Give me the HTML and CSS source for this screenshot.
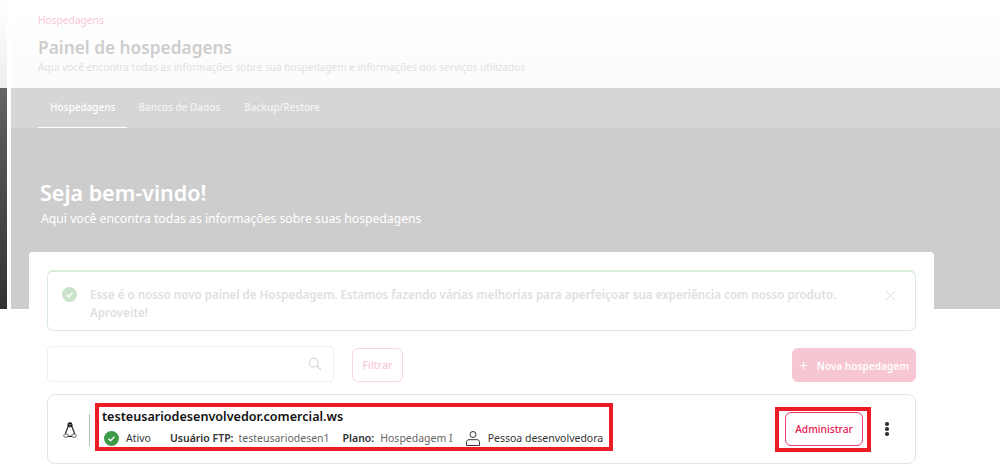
FILE: index.html
```html
<!DOCTYPE html>
<html lang="pt-BR">
<head>
    <meta charset="UTF-8">
    <title>Painel de hospedagens</title>
    <link rel="stylesheet" href="styles.css">
</head>
<body>
    <div class="shell">
        <div class="side"><div class="side_top"></div><div class="side_dark"></div></div>
        <main class="main">
            <header class="top">
                <div class="crumb">Hospedagens</div>
                <h1 class="title">Painel de hospedagens</h1>
                <p class="subtitle">Aqui você encontra todas as informações sobre sua hospedagem e informações dos serviços utilizados</p>
            </header>
            <nav class="tabs">
                <a class="tab active">Hospedagens</a>
                <a class="tab">Bancos de Dados</a>
                <a class="tab">Backup/Restore</a>
            </nav>
            <section class="hero">
                <h2 class="hero_title">Seja bem-vindo!</h2>
                <p class="hero_sub">Aqui você encontra todas as informações sobre suas hospedagens</p>
                <div class="card">
                    <div class="alert">
                        <svg class="alert_icon" viewBox="0 0 16 16"><circle cx="8" cy="8" r="8" fill="#c9e4cb"/><path d="M5 8.2l2.1 2.1L11 6.2" fill="none" stroke="#fff" stroke-width="1.5"/></svg>
                        <p class="alert_text">Esse é o nosso novo painel de Hospedagem. Estamos fazendo várias melhorias para aperfeiçoar sua experiência com nosso produto. Aproveite!</p>
                        <svg class="alert_close" viewBox="0 0 12 12"><path d="M1 1l10 10M11 1L1 11" stroke="#dcdcdc" stroke-width="1" fill="none"/></svg>
                    </div>
                    <div class="toolbar">
                        <div class="search">
                            <svg class="search_icon" viewBox="0 0 16 16"><circle cx="6.5" cy="6.5" r="5" fill="none" stroke="#d2d2d2" stroke-width="1.2"/><path d="M10.2 10.2l4.8 4.8" stroke="#d2d2d2" stroke-width="1.4"/></svg>
                        </div>
                        <button class="btn_filter" type="button">Filtrar</button>
                        <button class="btn_new" type="button"><span class="plus">+</span>Nova hospedagem</button>
                    </div>
                    <div class="host">
                        <svg class="linux" viewBox="0 0 14 16">
                            <path d="M7 .3C5.3.3 4.5 1.6 4.500 3v2.200h5V3C9.500 1.600 8.700.3 7 .3z" fill="#111"/>
                            <path d="M5.800 2.600h.7M7.500 2.600h.7" stroke="#fff" stroke-width="1"/>
                            <path d="M5.900 4.200L7 5l1.100-.8z" fill="#ddd"/>
                            <path d="M4.800 5C4.500 7.200 2.800 8.800 2.500 12M9.200 5c.3 2.200 2 3.800 2.300 7M4.500 14.300h5" fill="none" stroke="#222" stroke-width="1.2"/>
                            <ellipse cx="3" cy="13.600" rx="2.300" ry="1.700" fill="#fff" stroke="#666" stroke-width="1"/>
                            <ellipse cx="11" cy="13.600" rx="2.300" ry="1.700" fill="#fff" stroke="#666" stroke-width="1"/>
                        </svg>
                        <div class="host_sep"></div>
                        <div class="mark host_info">
                            <div class="domain">testeusariodesenvolvedor.comercial.ws</div>
                            <div class="meta">
                                <svg class="ok" viewBox="0 0 16 16"><circle cx="8" cy="8" r="8" fill="#3b9b48"/><path d="M4.800 8.200l2.200 2.100L11.200 6" fill="none" stroke="#fff" stroke-width="1.500"/></svg>
                                <span class="status">Ativo</span>
                                <b class="label ftp">Usuário FTP:</b>
                                <span class="value">testeusariodesen1</span>
                                <b class="label plan">Plano:</b>
                                <span class="value">Hospedagem I</span>
                                <svg class="person" viewBox="0 0 14 15"><circle cx="7" cy="3.500" r="3" fill="none" stroke="#333" stroke-width="1"/><path d="M.5 14.500v-3.300c0-1.500 1-2.500 2.500-2.500h8c1.500 0 2.500 1 2.500 2.500v3.300z" fill="none" stroke="#333" stroke-width="1"/></svg>
                                <span class="status">Pessoa desenvolvedora</span>
                            </div>
                        </div>
                        <div class="mark host_action">
                            <button class="btn_admin" type="button">Administrar</button>
                        </div>
                        <div class="kebab"><i></i><i></i><i></i></div>
                    </div>
                </div>
            </section>
        </main>
    </div>
</body>
</html>
```
FILE: styles.css
```css
* {
    box-sizing: border-box;
}
html, body {
    height: 473px;
}
body {
    margin: 0;
    background-color: #fff;
    font-family: "Noto Sans", "Open Sans", sans-serif;
}
p, h1, h2 {
    margin: 0;
}
.shell {
    display: flex;
    height: 309px;
}
.side {
    width: 7px;
    margin-right: 4px;
    display: flex;
    flex-direction: column;
    flex: none;
}
.side_top {
    height: 88px;
    background: linear-gradient(#fff, #eee);
}
.side_dark {
    flex: 1;
    background: linear-gradient(#666 0, #585858 40px, #333 100%);
}
.main {
    flex: 1;
    display: flex;
    flex-direction: column;
    min-width: 0;
}
.top {
    height: 88px;
    padding: 14px 0 0 27px;
    background: linear-gradient(#fff, #fbfbfb);
}
.crumb {
    font-size: 10.2px;
    line-height: 13px;
    color: #f8c8d6;
}
.title {
    margin-top: 9px;
    font-size: 17.3px;
    line-height: 24px;
    font-weight: 600;
    color: #cdcdcd;
}
.subtitle {
    font-size: 10.1px;
    line-height: 15px;
    color: #e0e0e0;
}
.tabs {
    height: 40px;
    padding-left: 27px;
    display: flex;
    background-color: #d6d6d6;
}
.tab {
    padding: 0 12px;
    font-size: 10px;
    line-height: 39px;
    font-weight: 500;
    color: #f4f4f4;
}
.tab.active {
    margin-right: -1px;
    color: #fff;
    border-bottom: 1px solid #fff;
}
.hero {
    flex: 1;
    min-height: 0;
    padding: 51px 0 0 29px;
    background-color: #cdcdcd;
}
.hero_title {
    font-size: 21.5px;
    line-height: 28px;
    font-weight: 600;
    color: #fff;
}
.hero_sub {
    margin: 3px 0 0 1px;
    font-size: 12.2px;
    line-height: 18px;
    color: #fff;
}
.card {
    width: 905px;
    margin: 24px 0 0 -11px;
    padding: 18px 18px 0;
    background-color: #fff;
    border-radius: 4px 4px 0 0;
}
.alert {
    height: 61px;
    padding: 14px 19px 0 14px;
    display: flex;
    background-color: #fff;
    border: 1px solid #d9ecd9;
    border-top-width: 2px;
    border-radius: 6px;
}
.alert_icon {
    width: 15px;
    height: 15px;
    flex: none;
    margin: 1px 13px 0 0;
}
.alert_text {
    flex: 1;
    font-size: 11.6px;
    line-height: 18px;
    font-weight: 600;
    color: #e0e0e0;
}
.alert_close {
    width: 11px;
    height: 11px;
    flex: none;
    margin: 4px 0 0 30px;
}
.toolbar {
    margin-top: 15px;
    display: flex;
    align-items: flex-end;
}
.search {
    width: 287px;
    height: 36px;
    padding-right: 11px;
    display: flex;
    align-items: center;
    justify-content: flex-end;
    border: 1px solid #efefef;
    border-radius: 5px;
}
.search_icon {
    width: 14px;
    height: 14px;
}
.btn_filter {
    width: 51px;
    height: 34px;
    margin-left: 18px;
    padding: 0;
    font-family: inherit;
    font-size: 10.5px;
    font-weight: 500;
    color: #f8c8d6;
    background-color: #fff;
    border: 1px solid #f9d5df;
    border-radius: 6px;
}
.btn_new {
    width: 124px;
    height: 34px;
    margin-left: auto;
    padding: 0;
    font-family: inherit;
    font-size: 10.1px;
    font-weight: 600;
    color: #fff;
    background-color: #f7c6d3;
    border: none;
    border-radius: 6px;
}
.plus {
    margin-right: 9px;
    font-size: 15px;
    font-weight: 400;
    vertical-align: -1px;
}
.host {
    height: 70px;
    margin-top: 12px;
    padding-left: 15px;
    display: flex;
    align-items: center;
    border: 1px solid #e4e4e4;
    border-radius: 8px;
}
.linux {
    width: 14px;
    height: 16px;
    flex: none;
    margin-top: 1px;
}
.host_sep {
    width: 1px;
    height: 32px;
    margin: 2px 5px 0 12px;
    background-color: #bbb;
    flex: none;
}
.mark {
    border: 4px solid #ed1c24;
    flex: none;
}
.host_info {
    width: 518px;
    height: 48px;
    margin-bottom: 4px;
    padding: 1px 0 0 3px;
}
.domain {
    font-size: 12.6px;
    line-height: 17px;
    font-weight: 600;
    color: #111;
}
.meta {
    margin-top: 5px;
    display: flex;
    align-items: center;
    font-size: 10.5px;
    line-height: 16px;
    color: #333;
}
.ok {
    width: 15px;
    height: 15px;
    margin: 0 7px 0 2px;
}
.label {
    font-weight: 600;
    color: #333;
}
.ftp {
    margin: 0 5px 0 19px;
}
.plan {
    margin: 0 6px 0 13px;
}
.value {
    color: #666;
}
.person {
    width: 14px;
    height: 15px;
    margin: 0 8px 0 13px;
}
.host_action {
    width: 96px;
    height: 45px;
    margin-left: 162px;
    padding: 1px 4px 0 6px;
}
.btn_admin {
    width: 78px;
    height: 34px;
    padding: 0;
    font-family: inherit;
    font-size: 10.2px;
    font-weight: 500;
    color: #e5164f;
    background-color: #fff;
    border: 1px solid #ea3f6c;
    border-radius: 6px;
}
.kebab {
    margin-left: 14px;
    display: flex;
    flex-direction: column;
    gap: 1.5px;
}
.kebab i {
    width: 3.5px;
    height: 3.5px;
    background-color: #333;
    border-radius: 50%;
}
```
